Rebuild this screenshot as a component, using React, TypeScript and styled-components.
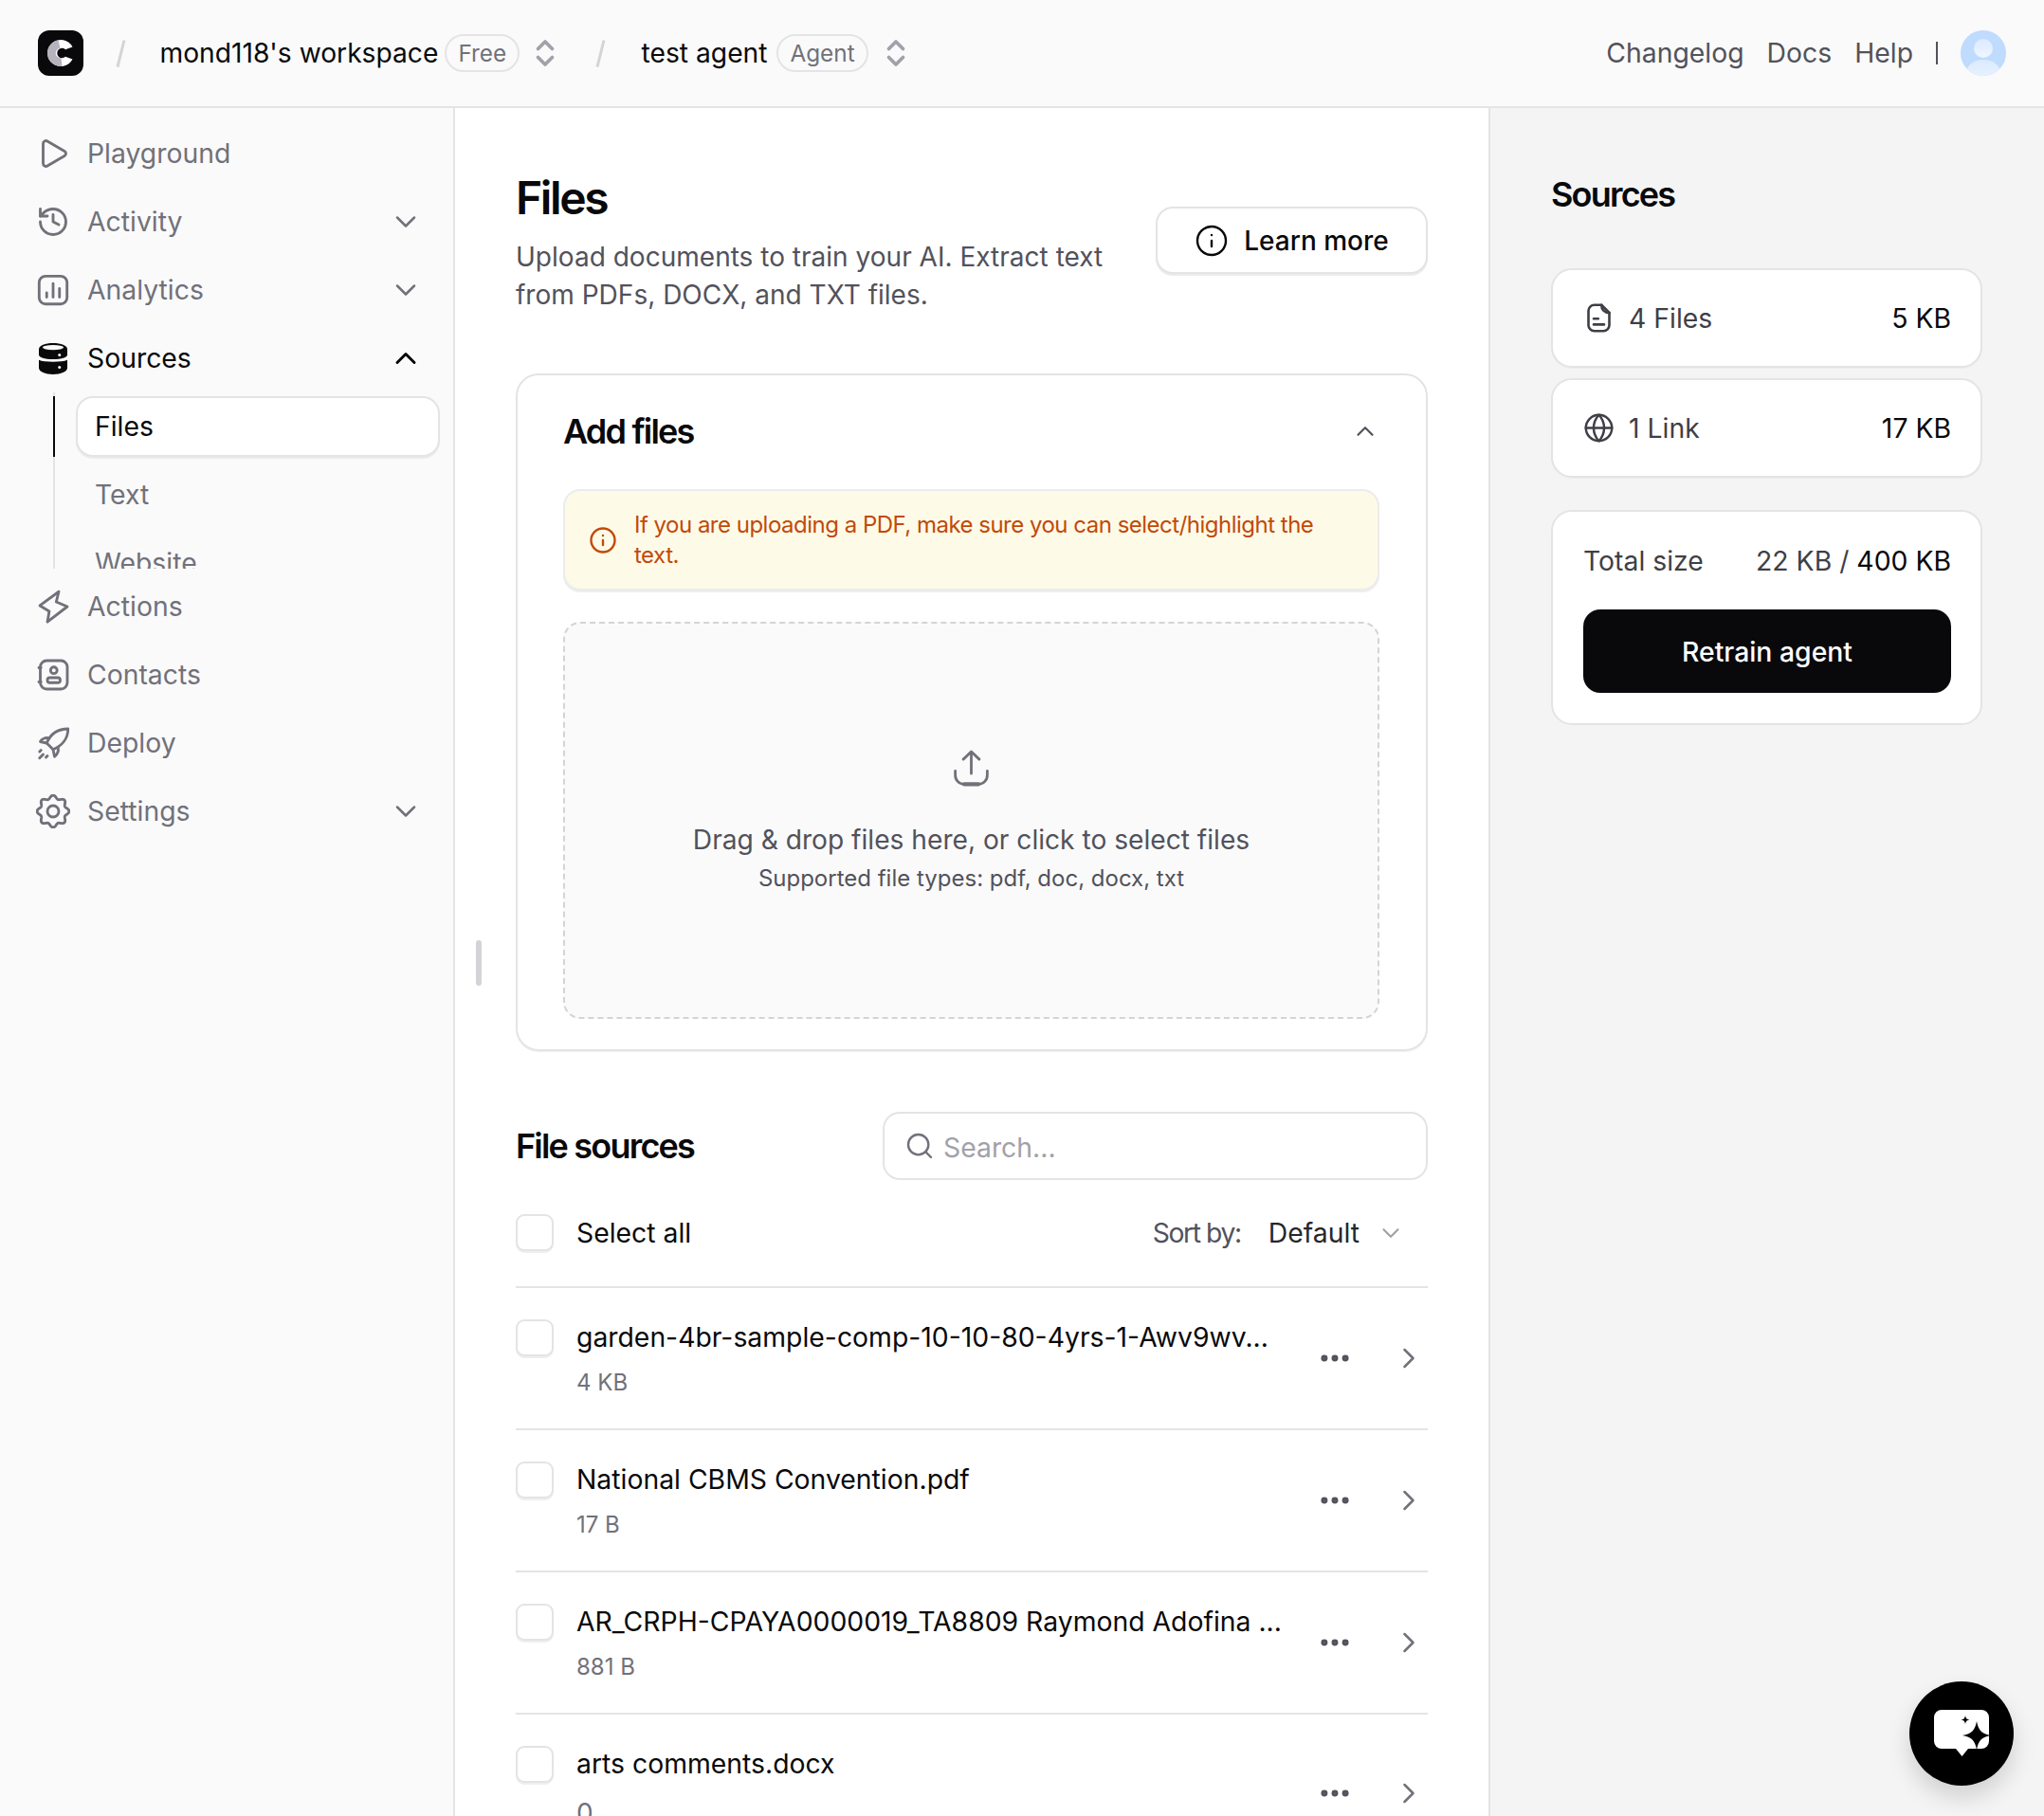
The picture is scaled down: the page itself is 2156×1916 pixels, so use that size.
import React from 'react';
import styled, { createGlobalStyle } from 'styled-components';
import { Play, History, ChevronDown, ChevronUp, ChevronRight, ChevronsUpDown, Info, Globe, Search, Ellipsis } from 'lucide-react';

const Global = createGlobalStyle`
  html, body { margin: 0; padding: 0; height: 100%; overflow: hidden; background: #fafafa; }
  * { box-sizing: border-box; }
  body { font-family: Inter, "Noto Sans", sans-serif; color: #09090b; }
`;

const Page = styled.div`
  position: relative; width: 2156px; height: 1916px; display: flex; flex-direction: column; overflow: hidden;
`;
const TopBar = styled.header`
  height: 114px; flex: none; display: flex; align-items: center; padding: 0 40px;
  background: #fafafa; border-bottom: 2px solid #e4e4e7;
`;
const LogoMark = styled.div`
  width: 48px; height: 48px; border-radius: 12px; background: #09090b; flex: none; overflow: hidden;
  display: flex; align-items: center; justify-content: center;
`;
const Slash = styled.span`
  width: 2.5px; height: 29px; background: #d4d4d8; transform: rotate(14deg); flex: none;
  margin: 0 ${p => p.$right}px 0 ${p => p.$left}px;
`;
const Crumb = styled.span`
  font-size: 28.2px; font-weight: 400; white-space: nowrap; color: #09090b;
`;
const Tag = styled.span`
  height: 40px; border: 2px solid #e4e4e7; border-radius: 20px; padding: 0 12px; margin-left: ${p => p.$left}px;
  display: flex; align-items: center; font-size: 24.3px; color: #71717a; background: #fafafa;
`;
const Stepper = styled.span`
  display: flex; color: #a1a1aa; margin-left: ${p => p.$left}px; margin-right: ${p => p.$right}px;
`;
const TopLinks = styled.nav`
  margin-left: auto; display: flex; align-items: center; gap: 24px;
`;
const TopLink = styled.span`
  font-size: 28.35px; color: #52525b;
`;
const TopRule = styled.span`
  width: 2px; height: 24px; background: #52525b;
`;
const Avatar = styled.span`
  width: 48px; height: 48px; display: block; border-radius: 50%; overflow: hidden;
`;

const Body = styled.div`
  flex: 1; display: flex; min-height: 0;
`;
const Sidebar = styled.aside`
  position: relative; width: 480px; flex: none; padding: 12px 0 0 0; border-right: 2px solid #e4e4e7; background: #fafafa;
`;
const NavRow = styled.div`
  height: 72px; display: flex; align-items: center; padding: 0 32px 0 38px; gap: 18px;
  color: ${p => (p.$active ? '#09090b' : '#71717a')};
`;
const NavIcon = styled.span`
  width: 36px; height: 36px; flex: none; display: block;
`;
const NavLabel = styled.span`
  flex: 1; font-size: 28.35px; line-height: 36px;
`;
const SubList = styled.div`
  position: relative; height: 186px; overflow: hidden; padding: 4px 14px 0 80px; margin-bottom: 4px;
  display: flex; flex-direction: column; gap: 8px;
  &::before { content: ''; position: absolute; left: 56px; top: 0; bottom: 0; width: 2px; background: #e4e4e7; }
  &::after { content: ''; position: absolute; left: 56px; top: 4px; height: 64px; width: 2px; background: #09090b; }
`;
const SubItem = styled.div`
  height: 64px; flex: none; border-radius: 18px; padding-left: 18px; display: flex; align-items: center;
  font-size: 28.35px; color: ${p => (p.$active ? '#09090b' : '#71717a')};
  background: ${p => (p.$active ? '#fff' : 'transparent')};
  border: 2px solid ${p => (p.$active ? '#e4e4e7' : 'transparent')};
  box-shadow: ${p => (p.$active ? '0 2px 0 #ececee' : 'none')};
`;
const Grip = styled.span`
  position: absolute; left: 502px; top: 878px; width: 6px; height: 48px; border-radius: 3px; background: #d4d4d8;
`;

const Main = styled.main`
  width: 1092px; flex: none; background: #fff; padding: 64px 64px 0 64px; overflow: hidden; border-right: 2px solid #e4e4e7;
`;
const Intro = styled.div`
  display: flex; align-items: center; justify-content: space-between; height: 152px;
`;
const IntroText = styled.div`
  width: 640px; padding-top: 2px;
`;
const PageTitle = styled.h1`
  margin: 0 0 12px; font-size: 48px; line-height: 60px; font-weight: 600; letter-spacing: -0.05em;
`;
const Lead = styled.p`
  margin: 0; font-size: 28.04px; line-height: 40px; color: #52525b;
`;
const LearnButton = styled.div`
  width: 287px; height: 71px; flex: none; margin-top: -2px; padding-top: 2px; display: flex; align-items: center; justify-content: center; gap: 16px;
  border: 2px solid #e4e4e7; border-radius: 18px; background: #fff; box-shadow: 0 2px 0 #ececee;
  font-size: 28px; font-weight: 500;
`;
const Card = styled.section`
  margin-top: 64px; height: 715px; border: 2px solid #e4e4e7; border-radius: 24px; padding: 0 49px 32px 48px;
  box-shadow: 0 1px 0 #f0f0f1;
`;
const CardHead = styled.div`
  height: 120px; padding-bottom: 2px; display: flex; align-items: center; justify-content: space-between; color: #52525b;
`;
const SectionTitle = styled.h2`
  margin: 0; font-size: 36px; line-height: 48px; font-weight: 600; letter-spacing: -0.05em; color: #09090b;
`;
const Alert = styled.div`
  height: 107px; display: flex; align-items: center; gap: 18px; padding: 0 48px 0 25px; border-radius: 18px;
  background: #fefae8; border: 2px solid #ececec; box-shadow: 0 2px 0 #eeeeee; color: #c14a09;
  font-size: 24px; line-height: 32px; letter-spacing: -0.021em;
`;
const AlertIcon = styled.span`
  display: block; flex: none; width: 30px; height: 30px;
`;
const Drop = styled.div`
  margin-top: 33px; height: 419px; border: 2px dashed #d4d4d8; border-radius: 18px; background: #fafafa;
  display: flex; flex-direction: column; align-items: center; justify-content: center; color: #52525b; padding-top: 2px;
`;
const DropIcon = styled.span`
  width: 45px; height: 45px; display: block; color: #71717a; margin-bottom: 33px;
`;
const DropText = styled.div`
  font-size: 28.15px; line-height: 40px;
`;
const DropHint = styled.div`
  font-size: 24px; line-height: 36px; margin-top: 3px;
`;
const SourcesHead = styled.div`
  margin-top: 64px; height: 72px; display: flex; align-items: center; justify-content: space-between;
`;
const SearchBox = styled.div`
  width: 575px; height: 72px; border: 2px solid #e4e4e7; border-radius: 18px; display: flex; align-items: center;
  padding-left: 21px; gap: 9px; color: #71717a; background: #fff;
`;
const SearchText = styled.span`
  font-size: 28.35px; color: #a1a1aa; margin-top: 4px;
`;
const SelectBar = styled.div`
  height: 112px; padding-bottom: 1px; display: flex; align-items: center;
`;
const Box = styled.span`
  width: 40px; height: 39px; flex: none; display: block; border: 2px solid #e4e4e7; border-radius: 9px; background: #fff;
  box-shadow: 0 2px 0 #efefef;
`;
const SelectLabel = styled.span`
  margin-left: 24px; font-size: 28.35px;
`;
const SortBy = styled.span`
  margin-left: auto; font-size: 28.35px; color: #52525b; letter-spacing: -0.05em;
`;
const SortValue = styled.span`
  margin-left: 29px; font-size: 28.35px; color: #27272a;
`;
const SortChevron = styled.span`
  display: flex; color: #a1a1aa; margin: 0 24px 0 18px;
`;
const FileRow = styled.div`
  height: ${p => (p.$tall ? 170 : 150)}px; border-top: 2px solid #e4e4e7; display: flex; align-items: ${p => (p.$tall ? 'flex-start' : 'center')};
  position: relative;
`;
const FileMain = styled.div`
  height: 100%; padding-top: 33px; display: flex; gap: 24px; flex: none; width: 814px;
`;
const FileText = styled.div`
  display: flex; flex-direction: column; gap: 15px; min-width: 0;
`;
const FileName = styled.span`
  font-size: 28.35px; line-height: 36px; white-space: nowrap; margin-top: 1px;
`;
const FileSize = styled.span`
  font-size: ${p => (p.$big ? 28 : 24)}px; line-height: 30px; color: #71717a; margin-top: ${p => (p.$big ? 4 : 0)}px;
`;
const FileActions = styled.div`
  display: flex; align-items: center; color: #52525b; height: ${p => (p.$tall ? '166px' : 'auto')};
`;
const Dots = styled.span`
  display: flex; width: 38px; margin-left: 31px;
`;
const RowChevron = styled.span`
  display: flex; margin-left: 41px; color: #71717a;
`;

const Aside = styled.aside`
  flex: 1; background: #f4f4f5; padding: 64px 65px 0 64px;
`;
const AsideTitle = styled.h2`
  margin: 0 0 51px; font-size: 36px; line-height: 54px; font-weight: 600; letter-spacing: -0.05em;
`;
const StatCard = styled.div`
  height: 105px; border: 2px solid #e4e4e7; border-radius: 22px; background: #fff; padding: 0 31px 0 32px;
  display: flex; align-items: center; margin-bottom: 11px; box-shadow: 0 1px 0 #ececee;
`;
const StatIcon = styled.span`
  width: 33px; height: 33px; flex: none; display: block; color: #3f3f46; margin-right: 15px;
`;
const StatLabel = styled.span`
  flex: 1; font-size: 28.35px; color: #3f3f46;
`;
const StatValue = styled.span`
  font-size: 28.35px; color: #09090b;
`;
const TotalCard = styled.div`
  margin-top: 34px; height: 227px; border: 2px solid #e4e4e7; border-radius: 22px; background: #fff; padding: 34px 31px 33px 32px;
`;
const TotalRow = styled.div`
  height: 36px; display: flex; align-items: center; justify-content: space-between; font-size: 28.35px; color: #3f3f46;
`;
const Strong = styled.span`
  color: #09090b;
`;
const Retrain = styled.div`
  margin-top: 33px; height: 88px; border-radius: 18px; background: #09090b; color: #fff; display: flex; align-items: center;
  justify-content: center; font-size: 28.35px; font-weight: 500; padding-top: 1px;
`;
const ChatBubble = styled.div`
  position: absolute; left: 2014px; top: 1774px; width: 110px; height: 110px; border-radius: 50%; background: #000;
  box-shadow: 0 12px 24px rgba(0,0,0,.15); display: flex; align-items: center; justify-content: center;
`;

const ico = { width: '100%', height: '100%', viewBox: '0 0 24 24', fill: 'none', stroke: 'currentColor', strokeWidth: 1.9, strokeLinecap: 'round' as const, strokeLinejoin: 'round' as const };

const gearPath = (() => {
  const pts: string[] = [];
  for (let i = 0; i <= 240; i++) {
    const t = (i / 240) * Math.PI * 2;
    const r = 10.1 + 1.15 * Math.cos(8 * t);
    pts.push(`${(12 + r * Math.cos(t)).toFixed(2)} ${(12 + r * Math.sin(t)).toFixed(2)}`);
  }
  return 'M' + pts.join('L') + 'Z';
})();

const AnalyticsIcon = () => (
  <svg {...ico}><rect x="2.2" y="2.2" width="19.6" height="19.6" rx="4.5" /><path d="M7.5 17v-3M12 17V7.5M16.5 17v-6" /></svg>
);
const SourcesIcon = () => (
  <svg width="100%" height="100%" viewBox="0 0 24 24">
    <path d="M2 5.500C2 3 6.500 1.300 12 1.300s10 1.700 10 4.200v4c0 2-4 3.200-10 3.200S2 11.500 2 9.500Z" fill="#09090b" />
    <ellipse cx="12" cy="4.400" rx="7.400" ry="1.700" fill="#fafafa" />
    <path d="M2 13.200c2 1 5.500 1.300 10 1.300s8-.3 10-1.300v5.600c0 2.500-4.500 4.500-10 4.500S2 21.300 2 18.800Z" fill="#09090b" />
    <circle cx="16.500" cy="9.600" r="1" fill="#fafafa" />
    <circle cx="16.500" cy="18.400" r="1" fill="#fafafa" />
  </svg>
);
const BoltIcon = () => (
  <svg {...ico}><path d="M16 1.500 2.700 11.300 9.300 15.300 8 22.800 22 12 14.200 8.700Z" /></svg>
);
const ContactIcon = () => (
  <svg {...ico}><rect x="3" y="2" width="19" height="20" rx="4.500" /><circle cx="12.500" cy="8.800" r="2.300" /><rect x="8" y="14" width="9" height="3.500" rx="1.750" /><path d="M2 7h1.500M2 17h1.500" /></svg>
);
const RocketIcon = () => (
  <svg {...ico}><path d="M22.500 2C15 2 10 6 7.500 12l4.500 4.500C18 14 22.500 9 22.500 2Z" /><path d="M9 8.500C6.500 8 4 9 3 11l4.500 1M15.500 15c.5 2.500-.5 5-2.500 6.500l-1-5M2.500 22.500l2.500-2.500M2.500 18l1-1M7 22l1-1" /></svg>
);
const GearIcon = () => (
  <svg {...ico}><path d={gearPath} /><circle cx="12" cy="12" r="4" /></svg>
);
const UploadIcon = () => (
  <svg {...ico} strokeWidth={1.5}>
    <path d="M12 15V3M7.500 7 12 2.700 16.500 7" />
    <path d="M3 13.500v2.500A5 5 0 0 0 8 21h8a5 5 0 0 0 5-5v-2.500" />
    <path d="M8 21h8" strokeWidth={2.2} />
  </svg>
);
const DocIcon = () => (
  <svg {...ico}><path d="M14 2H8.500A4.500 4.500 0 0 0 4 6.500v11A4.500 4.500 0 0 0 8.500 22h7a4.500 4.500 0 0 0 4.500-4.500V8z" /><path d="M14 2c0 3.500 2 6 6 6M8 12.500h3.500M8 17h8" /></svg>
);

const files = [
  { name: 'garden-4br-sample-comp-10-10-80-4yrs-1-Awv9wv...', size: '4 KB' },
  { name: 'National CBMS Convention.pdf', size: '17 B' },
  { name: 'AR_CRPH-CPAYA0000019_TA8809 Raymond Adofina ...', size: '881 B' },
  { name: 'arts comments.docx', size: '0', tall: true },
];

const nav = [
  { label: 'Playground', icon: <Play {...ico} /> },
  { label: 'Activity', icon: <History {...ico} />, chevron: true },
  { label: 'Analytics', icon: <AnalyticsIcon />, chevron: true },
];
const navAfter = [
  { label: 'Actions', icon: <BoltIcon /> },
  { label: 'Contacts', icon: <ContactIcon /> },
  { label: 'Deploy', icon: <RocketIcon /> },
  { label: 'Settings', icon: <GearIcon />, chevron: true },
];

const Item = ({ label, icon, chevron }: { label: string; icon: React.ReactNode; chevron?: boolean }) => (
  <NavRow>
    <NavIcon>{icon}</NavIcon>
    <NavLabel>{label}</NavLabel>
    {chevron && <ChevronDown size={36} strokeWidth={1.7} />}
  </NavRow>
);

export default function App() {
  return (
    <Page>
      <Global />
      <TopBar>
        <LogoMark>
          <svg width="48" height="48" viewBox="0 0 48 48">
            <path d="M36.500 17.500A14 14 0 1 0 36.500 30.500L29 27.800A5.200 5.200 0 1 1 29 20.200Z" fill="#fff" />
            <path d="M21.500 10.200A14 14 0 0 0 25.500 37.900L24.500 29.200A5.200 5.200 0 0 1 23.500 18.800Z" fill="#b6b3bd" />
          </svg>
        </LogoMark>
        <Slash $left={38} $right={40} />
        <Crumb>mond118's workspace</Crumb>
        <Tag $left={7}>Free</Tag>
        <Stepper $left={9} $right={39}><ChevronsUpDown size={36} strokeWidth={2.5} /></Stepper>
        <Slash $left={0} $right={42} />
        <Crumb>test agent</Crumb>
        <Tag $left={10}>Agent</Tag>
        <Stepper $left={11} $right={0}><ChevronsUpDown size={36} strokeWidth={2.5} /></Stepper>
        <TopLinks>
          <TopLink>Changelog</TopLink>
          <TopLink>Docs</TopLink>
          <TopLink>Help</TopLink>
          <TopRule />
          <Avatar>
            <svg width="48" height="48" viewBox="0 0 48 48">
              <defs>
                <linearGradient id="ag" x1="0" y1="0" x2="0" y2="1">
                  <stop offset="0" stopColor="#dbeafe" />
                  <stop offset="1" stopColor="#eff6ff" />
                </linearGradient>
              </defs>
              <rect width="48" height="48" fill="#bfdbfe" />
              <circle cx="24" cy="19" r="10" fill="url(#ag)" />
              <ellipse cx="24" cy="45" rx="18" ry="14" fill="url(#ag)" />
            </svg>
          </Avatar>
        </TopLinks>
      </TopBar>
      <Body>
        <Sidebar>
          {nav.map(n => <Item key={n.label} {...n} />)}
          <NavRow $active>
            <NavIcon><SourcesIcon /></NavIcon>
            <NavLabel>Sources</NavLabel>
            <ChevronUp size={36} strokeWidth={2} />
          </NavRow>
          <SubList>
            <SubItem $active>Files</SubItem>
            <SubItem>Text</SubItem>
            <SubItem>Website</SubItem>
          </SubList>
          {navAfter.map(n => <Item key={n.label} {...n} />)}
          <Grip />
        </Sidebar>
        <Main>
          <Intro>
            <IntroText>
              <PageTitle>Files</PageTitle>
              <Lead>Upload documents to train your AI. Extract text from PDFs, DOCX, and TXT files.</Lead>
            </IntroText>
            <LearnButton><Info size={36} strokeWidth={1.6} />Learn more</LearnButton>
          </Intro>
          <Card>
            <CardHead>
              <SectionTitle>Add files</SectionTitle>
              <ChevronUp size={30} strokeWidth={1.7} />
            </CardHead>
            <Alert>
              <AlertIcon><Info width="100%" height="100%" strokeWidth={1.9} /></AlertIcon>
              <span>If you are uploading a PDF, make sure you can select/highlight the text.</span>
            </Alert>
            <Drop>
              <DropIcon><UploadIcon /></DropIcon>
              <DropText>Drag &amp; drop files here, or click to select files</DropText>
              <DropHint>Supported file types: pdf, doc, docx, txt</DropHint>
            </Drop>
          </Card>
          <SourcesHead>
            <SectionTitle>File sources</SectionTitle>
            <SearchBox><Search size={32} strokeWidth={1.8} /><SearchText>Search...</SearchText></SearchBox>
          </SourcesHead>
          <SelectBar>
            <Box />
            <SelectLabel>Select all</SelectLabel>
            <SortBy>Sort by:</SortBy>
            <SortValue>Default</SortValue>
            <SortChevron><ChevronDown size={30} strokeWidth={1.7} /></SortChevron>
          </SelectBar>
          {files.map(f => (
            <FileRow key={f.name} $tall={f.tall}>
              <FileMain>
                <Box />
                <FileText>
                  <FileName>{f.name}</FileName>
                  <FileSize $big={f.tall}>{f.size}</FileSize>
                </FileText>
              </FileMain>
              <FileActions $tall={f.tall}>
                <Dots><Ellipsis size={38} strokeWidth={2.4} /></Dots>
                <RowChevron><ChevronRight size={36} strokeWidth={1.7} /></RowChevron>
              </FileActions>
            </FileRow>
          ))}
        </Main>
        <Aside>
          <AsideTitle>Sources</AsideTitle>
          <StatCard>
            <StatIcon><DocIcon /></StatIcon>
            <StatLabel>4 Files</StatLabel>
            <StatValue>5 KB</StatValue>
          </StatCard>
          <StatCard>
            <StatIcon><Globe width="100%" height="100%" strokeWidth={1.8} /></StatIcon>
            <StatLabel>1 Link</StatLabel>
            <StatValue>17 KB</StatValue>
          </StatCard>
          <TotalCard>
            <TotalRow>
              <span>Total size</span>
              <span>22 KB / <Strong>400 KB</Strong></span>
            </TotalRow>
            <Retrain>Retrain agent</Retrain>
          </TotalCard>
        </Aside>
      </Body>
      <ChatBubble>
        <svg width="66" height="66" viewBox="0 0 66 66">
          <path d="M12 8h42a8 8 0 0 1 8 8v25a8 8 0 0 1-8 8H40l-6.500 8-6.500-8H12a8 8 0 0 1-8-8V16a8 8 0 0 1 8-8Z" fill="#fff" />
          <path d="M49 20c2 10 5 13 15 15-10 2-13 5-15 15-2-10-5-13-15-15 10-2 13-5 15-15Z" fill="#000" />
          <path d="M37 14c.6 3 1.500 4 4.500 4.500-3 .5-3.900 1.500-4.500 4.500-.6-3-1.500-4-4.500-4.500 3-.5 3.900-1.500 4.500-4.500Z" fill="#000" />
        </svg>
      </ChatBubble>
    </Page>
  );
}
